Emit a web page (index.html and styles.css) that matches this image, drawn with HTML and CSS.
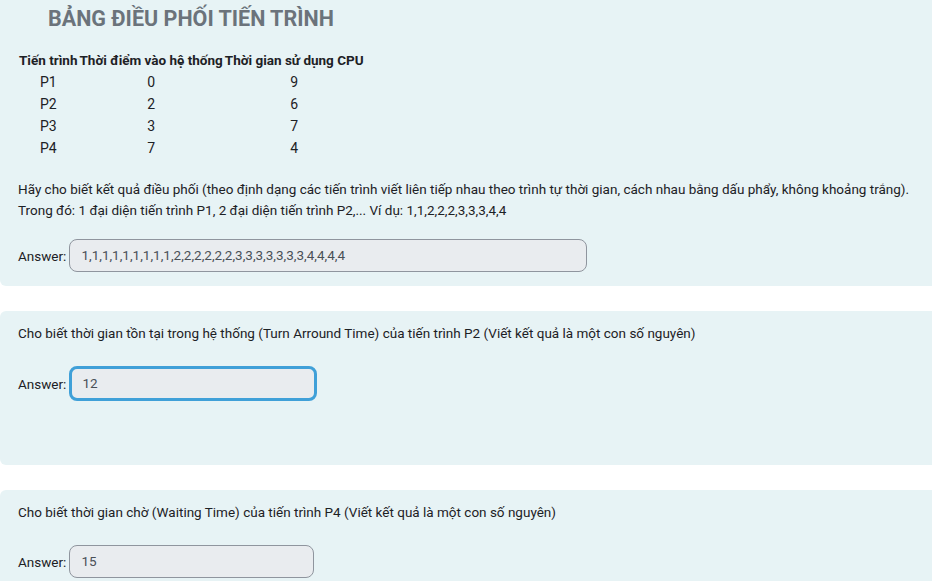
FILE: index.html
```html
<!DOCTYPE html>
<html lang="vi">
<head>
<meta charset="utf-8">
<title>Bảng điều phối tiến trình</title>
<link rel="stylesheet" href="styles.css">
</head>
<body>
<div class="page">
  <section class="panel panel-first">
    <h2 class="title">BẢNG ĐIỀU PHỐI TIẾN TRÌNH</h2>
    <table class="proc">
      <thead>
        <tr><th>Tiến trình</th><th>Thời điểm vào hệ thống</th><th>Thời gian sử dụng CPU</th></tr>
      </thead>
      <tbody>
        <tr><td>P1</td><td>0</td><td>9</td></tr>
        <tr><td>P2</td><td>2</td><td>6</td></tr>
        <tr><td>P3</td><td>3</td><td>7</td></tr>
        <tr><td>P4</td><td>7</td><td>4</td></tr>
      </tbody>
    </table>
    <p class="qtext">Hãy cho biết kết quả điều phối (theo định dạng các tiến trình viết liên tiếp nhau theo trình tự thời gian, cách nhau bằng dấu phẩy, không khoảng trắng).<br>Trong đó: 1 đại diện tiến trình P1, 2 đại diện tiến trình P2,... Ví dụ: 1,1,2,2,2,3,3,3,4,4</p>
    <div class="answer answer-first">
      <label class="answer-label">Answer:</label>
      <div class="field field-wide">1,1,1,1,1,1,1,1,1,2,2,2,2,2,2,3,3,3,3,3,3,3,4,4,4,4</div>
    </div>
  </section>

  <section class="panel panel-tall">
    <p class="qtext">Cho biết thời gian tồn tại trong hệ thống (Turn Arround Time) của tiến trình P2 (Viết kết quả là một con số nguyên)</p>
    <div class="answer">
      <label class="answer-label">Answer:</label>
      <div class="field field-focus">12</div>
    </div>
  </section>

  <section class="panel">
    <p class="qtext">Cho biết thời gian chờ (Waiting Time) của tiến trình P4 (Viết kết quả là một con số nguyên)</p>
    <div class="answer">
      <label class="answer-label">Answer:</label>
      <div class="field field-short">15</div>
    </div>
  </section>
</div>
</body>
</html>
```

FILE: styles.css
```css
html, body {
  margin: 0;
  padding: 0;
  background: #ffffff;
  overflow: hidden;
}
body {
  font-family: Roboto, "Noto Sans", "Liberation Sans", sans-serif;
  font-size: 13.5px;
  color: #1d2125;
}
.page {
  display: flex;
  flex-direction: column;
  gap: 25px;
}
.panel {
  background: #e7f3f5;
  border-radius: 6px 0 0 6px;
  padding: 12px 0 15px 18px;
}
.panel-first {
  border-radius: 0 0 0 6px;
  padding-top: 6px;
  padding-bottom: 14px;
}
.panel-tall {
  padding-bottom: 64px;
}
.title {
  margin: 0 0 18px 30px;
  font-size: 21.5px;
  font-weight: 700;
  color: #6b737b;
  line-height: 25px;
}
.proc {
  border-collapse: collapse;
  margin: 0 0 20px 0;
}
.proc th, .proc td {
  padding: 0 1px;
  height: 22px;
  text-align: center;
}
.proc th {
  font-weight: 700;
  font-size: 13.5px;
}
.proc td {
  font-size: 14px;
}
.qtext {
  margin: 0;
  line-height: 21px;
}
.answer {
  display: flex;
  align-items: center;
  gap: 3px;
  margin-top: 22px;
}
.answer-first {
  margin-top: 18px;
}
.answer-label {
  white-space: nowrap;
}
.field {
  box-sizing: border-box;
  height: 33px;
  line-height: 31px;
  background: #e9ecef;
  border: 1px solid #8f959e;
  border-radius: 8px;
  padding: 0 11px;
  color: #495057;
}
.field-wide {
  width: 518px;
}
.field-focus {
  width: 248px;
  height: 35px;
  line-height: 29px;
  border: 3px solid #40a0d8;
  padding-left: 10px;
}
.field-short {
  width: 245px;
}
```
